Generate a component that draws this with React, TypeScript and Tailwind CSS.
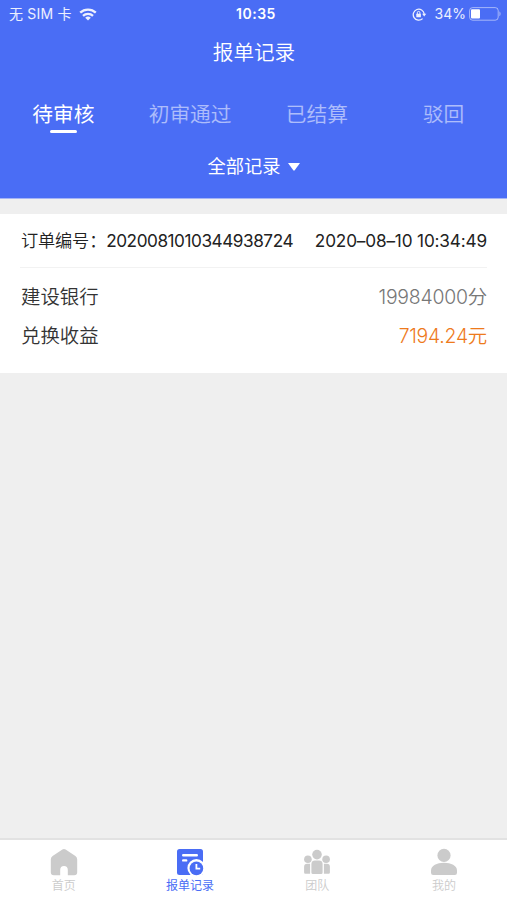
import React, { useState } from 'react';
import clsx from 'clsx';

const WifiIcon: React.FC = () => (
  <svg width="18" height="13" viewBox="0 0 18 13" fill="none" stroke="currentColor" strokeWidth="2.3">
    <path d="M1.2 4.7a11.2 11.2 0 0 1 15.6 0" />
    <path d="M4 7.8a7.2 7.2 0 0 1 10 0" />
    <path d="M9 12.6 6.2 9.8a4 4 0 0 1 5.6 0z" fill="currentColor" stroke="none" />
  </svg>
);

const RotationLockIcon: React.FC = () => (
  <svg width="15" height="13" viewBox="0 0 15 13" fill="none" stroke="currentColor">
    <path d="M10.6 10.6A5.5 5.5 0 1 1 12.2 6" strokeWidth="1.3" />
    <path d="M10.1 5.8h4.2l-2.1 2.8z" fill="currentColor" stroke="none" />
    <path d="M5.3 6V4.7a1.3 1.3 0 0 1 2.6 0V6" strokeWidth="1" />
    <rect x="4.3" y="5.8" width="4.6" height="3.5" rx="0.5" fill="currentColor" stroke="none" />
  </svg>
);

const BatteryIcon: React.FC = () => (
  <svg width="32" height="14" viewBox="0 0 32 14" fill="none">
    <rect x="0.6" y="0.6" width="28.6" height="12.6" rx="3" stroke="white" strokeOpacity="0.5" />
    <rect x="2" y="2.2" width="9" height="9.4" rx="1" fill="white" />
    <path d="M30.4 4.6c1.6.6 1.6 4 0 4.6z" fill="white" fillOpacity="0.5" />
  </svg>
);

const HomeIcon: React.FC = () => (
  <svg width="28" height="28" viewBox="0 0 28 28" fill="currentColor">
    <path d="M12.4 1.5a3 3 0 0 1 3.2 0l9.8 6.6a4 4 0 0 1 1.8 3.3v12.9a3 3 0 0 1-3 3h-6.4v-5.4a3.8 3.8 0 0 0-7.6 0v5.4H3.8a3 3 0 0 1-3-3V11.4a4 4 0 0 1 1.8-3.3z" />
  </svg>
);

const RecordIcon: React.FC = () => (
  <svg width="28" height="28" viewBox="0 0 28 28">
    <rect x="1" y="1" width="26" height="26" rx="2.5" fill="#4a6df5" />
    <path d="M7.2 7.2h13.6M7.2 12.4h3" stroke="white" strokeWidth="2.4" strokeLinecap="round" />
    <circle cx="20.4" cy="20" r="9" fill="white" />
    <circle cx="20.4" cy="20.4" r="6.8" fill="#4a6df5" />
    <path d="M20.4 16v4.6h3.8" stroke="white" strokeWidth="1.8" fill="none" />
  </svg>
);

const TeamIcon: React.FC = () => (
  <svg width="28" height="28" viewBox="0 0 28 28" fill="currentColor">
    <circle cx="14" cy="6.6" r="4.8" />
    <circle cx="4.9" cy="11.2" r="3.8" />
    <circle cx="23.1" cy="11.2" r="3.8" />
    <path d="M8.4 15.8a3.6 3.6 0 0 1 3.6-3.2h4a3.6 3.6 0 0 1 3.6 3.2v8.6a1.5 1.5 0 0 1-1.5 1.5H9.9a1.5 1.5 0 0 1-1.5-1.5z" />
    <path d="M7.1 15.7v10H2.3a1.2 1.2 0 0 1-1.2-1.2v-5.8a3 3 0 0 1 3-3zM20.9 15.7v10h4.8a1.2 1.2 0 0 0 1.2-1.2v-5.8a3 3 0 0 0-3-3z" />
  </svg>
);

const UserIcon: React.FC = () => (
  <svg width="28" height="28" viewBox="0 0 28 28" fill="currentColor">
    <circle cx="14" cy="7.4" r="6.6" />
    <path d="M1 22.4c0-4.6 5.8-7.6 13-7.6s13 3 13 7.6v2.3a2.2 2.2 0 0 1-2.2 2.2H3.2A2.2 2.2 0 0 1 1 24.7z" />
  </svg>
);

const statusTabs = ['待审核', '初审通过', '已结算', '驳回'];

const navItems = [
  { label: '首页', icon: HomeIcon },
  { label: '报单记录', icon: RecordIcon },
  { label: '团队', icon: TeamIcon },
  { label: '我的', icon: UserIcon },
];

const StatusBar: React.FC = () => (
  <div className="grid grid-cols-3 items-center h-7 pl-[9px] pr-[6px] text-sm leading-5 text-white/90">
    <div className="flex items-center gap-[7px]">
      <span className="tracking-[0.2px]">无 SIM 卡</span>
      <WifiIcon />
    </div>
    <span className="pl-[2px] text-center font-semibold text-white tracking-[0.5px]">10:35</span>
    <div className="flex items-center justify-end">
      <RotationLockIcon />
      <span className="ml-[8px] mr-[3px]">34%</span>
      <BatteryIcon />
    </div>
  </div>
);

const App: React.FC = () => {
  const [activeTab, setActiveTab] = useState(0);

  return (
    <div className="flex flex-col h-[900px] overflow-hidden bg-[#efefef] font-['Inter','Noto_Sans_CJK_SC',sans-serif]">
      <header className="h-[199px] shrink-0 bg-[#4a6df5] border-b border-[#a5b4f5] text-white">
        <StatusBar />
        <h1 className="h-12 pt-px pl-px text-center text-[20.6px] leading-[48px] font-[350]">报单记录</h1>
        <nav className="grid grid-cols-4 pt-[23px]">
          {statusTabs.map((tab, index) => (
            <button
              key={tab}
              onClick={() => setActiveTab(index)}
              className={clsx(
                'flex flex-col items-center text-[20.7px] leading-8',
                index === activeTab ? 'font-normal' : 'font-[350] text-white/55'
              )}
            >
              {tab}
              {index === activeTab && <span className="-mt-px w-[27px] h-[3px] rounded-full bg-white" />}
            </button>
          ))}
        </nav>
        <button className="flex items-center justify-center gap-[7px] w-full mt-[19px] text-[18.3px] leading-7">
          全部记录
          <svg className="mt-[2px]" width="12" height="8" viewBox="0 0 12 8" fill="currentColor">
            <path d="M0 0h12L6.7 7.3a1 1 0 0 1-1.4 0z" />
          </svg>
        </button>
      </header>

      <main className="flex-1 pt-[15px]">
        <section className="h-[159px] px-[20px] bg-white text-[#333]">
          <div className="flex items-center justify-between h-[54px] pl-px border-b border-[#f2f2f2] text-[17.2px] text-[#222] whitespace-nowrap">
            <div className="flex">
              <span className="tracking-[-0.15px] font-[350]">订单编号：</span>
              <span className="tracking-[-0.46px]">2020081010344938724</span>
            </div>
            <span className="tracking-[-0.16px]">2020–08–10 10:34:49</span>
          </div>
          <div className="flex items-center justify-between pl-px mt-[10px] h-[39px] text-[19.4px]">
            <span className="font-[350]">建设银行</span>
            <span className="text-[#777] font-[350] tracking-[-0.2px]">19984000分</span>
          </div>
          <div className="flex items-center justify-between pl-px h-[39px] text-[19.4px]">
            <span className="font-[350]">兑换收益</span>
            <span className="text-[#ee7a1c] font-[350] tracking-[-0.25px]">7194.24元</span>
          </div>
        </section>
      </main>

      <footer className="grid grid-cols-4 h-[62px] shrink-0 pt-[8px] bg-white border-t-2 border-[#e2e2e2]">
        {navItems.map(({ label, icon: Icon }, index) => (
          <button
            key={label}
            className={clsx(
              'flex flex-col items-center text-xs leading-[19px]',
              index === 1 ? 'text-[#4a6df5]' : 'pl-px text-[#cbcbcb] font-[350]'
            )}
          >
            <Icon />
            <span>{label}</span>
          </button>
        ))}
      </footer>
    </div>
  );
};

export default App;
